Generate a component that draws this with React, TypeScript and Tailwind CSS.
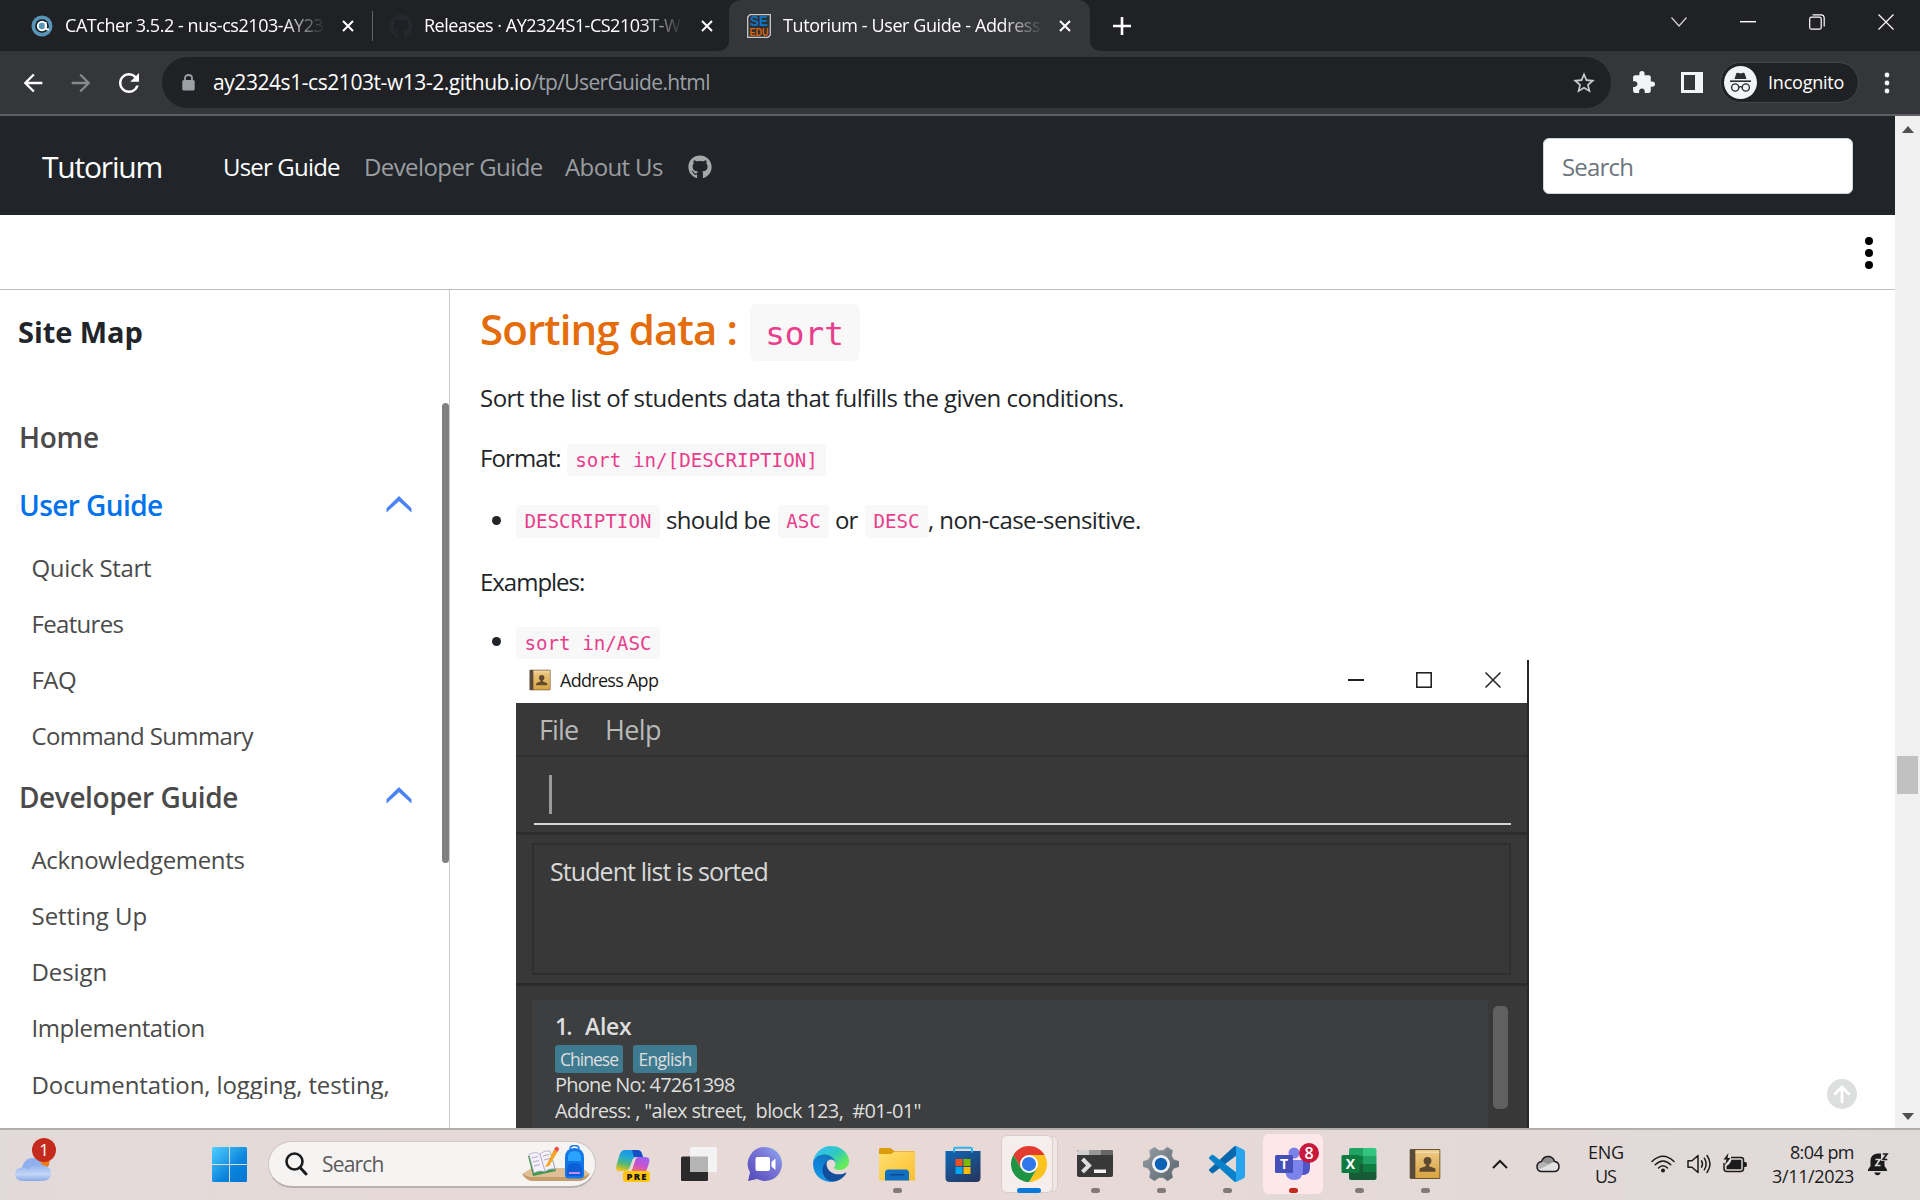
import React from "react";
import { FaGithub } from "react-icons/fa";
import { MdArrowBack, MdArrowForward, MdExtension, MdRefresh, MdStarBorder } from "react-icons/md";

/* ---------- Browser chrome ---------- */

function TabClose({ className = "" }: { className?: string }) {
  return (
    <svg className={`shrink-0 ${className}`} width="12" height="12" viewBox="0 0 12 12">
      <path d="M1 1L11 11M11 1L1 11" stroke="#fff" strokeWidth="2" />
    </svg>
  );
}

function TabStrip() {
  return (
    <div className="flex h-[51px] items-center bg-[#202124] text-[18px] text-white">
      <div className="flex h-[51px] w-[372px] shrink-0 items-center pl-[31px]">
        <svg className="shrink-0" width="22" height="22" viewBox="0 0 22 22">
          <circle cx="11" cy="11" r="10.5" fill="#5795b9" />
          <circle cx="11" cy="11" r="6.8" fill="#111418" />
          <circle cx="11" cy="11" r="4.2" fill="#5795b9" stroke="#fff" strokeWidth="2" />
          <path d="M14.6 7V12.5Q15.5 15 18 14.5" stroke="#fff" strokeWidth="2" fill="none" />
        </svg>
        <div className="ml-[12px] w-[260px] overflow-hidden whitespace-pre tracking-[-0.0255em] [mask-image:linear-gradient(to_right,#000_84%,transparent_100%)]">
          CATcher 3.5.2 - nus-cs2103-AY23
        </div>
        <TabClose className="ml-[17px]" />
      </div>
      <div className="h-[30px] w-px shrink-0 bg-[#5f6368]" />
      <div className="flex h-[51px] w-[356px] shrink-0 items-center pl-[16px]">
        <FaGithub className="size-[24px] shrink-0 text-[#24292e]" />
        <div className="ml-[11px] w-[259px] overflow-hidden whitespace-pre tracking-[-0.0275em] [mask-image:linear-gradient(to_right,#000_84%,transparent_100%)]">
          Releases · AY2324S1-CS2103T-W
        </div>
        <TabClose className="ml-[18px]" />
      </div>
      <div className="relative flex h-[51px] w-[361px] shrink-0 items-center rounded-t-[12px] bg-[#35363a] pl-[18px]">
        <div className="absolute bottom-0 -left-[10px] size-[10px] bg-[#35363a]">
          <div className="size-full rounded-br-[10px] bg-[#202124]" />
        </div>
        <div className="absolute -right-[10px] bottom-0 size-[10px] bg-[#35363a]">
          <div className="size-full rounded-bl-[10px] bg-[#202124]" />
        </div>
        <svg className="shrink-0" width="24" height="24" viewBox="0 0 24 24">
          <path d="M3 0.7H23.3V21L21 23.3H0.7V3Z" fill="#303135" stroke="#c9cacc" strokeWidth="1.3" />
          <text x="12" y="12.2" fill="#0b76c8" fontSize="14" fontWeight="700" textAnchor="middle" textLength="18" lengthAdjust="spacingAndGlyphs" fontFamily="Liberation Sans">SE</text>
          <text x="12" y="22" fill="#d9660d" fontSize="10.5" fontWeight="700" textAnchor="middle" textLength="19" lengthAdjust="spacingAndGlyphs" fontFamily="Liberation Sans">EDU</text>
        </svg>
        <div className="ml-[12px] w-[260px] overflow-hidden whitespace-pre tracking-[-0.0225em] [mask-image:linear-gradient(to_right,#000_84%,transparent_100%)]">
          Tutorium - User Guide - Address
        </div>
        <TabClose className="ml-[16px]" />
      </div>
      <svg className="ml-[23px] shrink-0" width="18" height="18" viewBox="0 0 18 18">
        <path d="M9 0V18M0 9H18" stroke="#fff" strokeWidth="2.6" />
      </svg>
      <div className="mb-[8px] ml-auto flex items-center pr-[26px]">
        <svg className="mr-[53px]" width="16" height="10" viewBox="0 0 16 10">
          <path d="M0.5 0.5L8 9L15.5 0.5" stroke="#d5d5d6" strokeWidth="1.2" fill="none" />
        </svg>
        <svg className="mr-[53px]" width="16" height="2" viewBox="0 0 16 2">
          <rect width="16" height="1.4" fill="#fff" />
        </svg>
        <svg className="mr-[53px]" width="16" height="16" viewBox="0 0 16 16">
          <rect x="0.7" y="3.2" width="11.5" height="12" rx="1.8" stroke="#fff" strokeWidth="1.2" fill="none" />
          <path d="M3.6 0.8H12Q15.2 0.8 15.2 4V12.5" stroke="#fff" strokeWidth="1.2" fill="none" />
        </svg>
        <svg width="16" height="16" viewBox="0 0 16 16">
          <path d="M0.5 0.5L15.5 15.5M15.5 0.5L0.5 15.5" stroke="#fff" strokeWidth="1.2" />
        </svg>
      </div>
    </div>
  );
}

function AddressBar() {
  return (
    <div className="flex h-[65px] items-center border-b-2 border-[#5e5f62] bg-[#35363a] text-white">
      <MdArrowBack className="ml-[19px] size-[28px] shrink-0" />
      <MdArrowForward className="ml-[20px] size-[28px] shrink-0 text-[#87888b]" />
      <MdRefresh className="ml-[19px] size-[30px] shrink-0" />
      <div className="ml-[18px] flex h-[51px] w-[1449px] shrink-0 items-center rounded-full bg-[#202124] text-[21px]">
        <svg className="ml-[20px] shrink-0" width="13" height="17" viewBox="0 0 13 17">
          <rect x="0.300" y="6" width="12.400" height="10.500" rx="1.500" fill="#9aa0a6" />
          <path d="M3 7V4.200Q3 1 6.500 1Q10 1 10 4.200V7" stroke="#9aa0a6" strokeWidth="1.800" fill="none" />
        </svg>
        <div className="ml-[18px] whitespace-pre tracking-[-0.0208em]">ay2324s1-cs2103t-w13-2.github.io</div>
        <div className="whitespace-pre tracking-[-0.0304em] text-[#9aa0a6]">/tp/UserGuide.html</div>
        <MdStarBorder className="mr-[14px] ml-auto size-[26px] shrink-0 text-[#c7c8ca]" />
      </div>
      <MdExtension className="ml-[20px] size-[25px] shrink-0 text-[#f1f3f4]" />
      <div className="ml-[25px] flex h-[21px] w-[22px] shrink-0 bg-[#f1f3f4] p-[3px]">
        <div className="h-full w-[11px] bg-[#35363a]" />
      </div>
      <div className="ml-[17px] flex h-[41px] w-[139px] shrink-0 items-center rounded-full border border-[#46474a] bg-[#202124]">
        <svg className="ml-[3px] shrink-0" width="33" height="33" viewBox="0 0 33 33">
          <circle cx="16.5" cy="16.5" r="16.5" fill="#f1f3f4" />
          <path d="M10.5 13L12.3 7.5Q12.6 6.6 13.6 6.8L16.5 7.4L19.4 6.8Q20.4 6.6 20.7 7.5L22.5 13Z" fill="#2b2c30" />
          <path d="M6 15.2H27" stroke="#2b2c30" strokeWidth="1.6" />
          <circle cx="11.2" cy="21.5" r="3.6" stroke="#2b2c30" strokeWidth="1.4" fill="none" />
          <circle cx="21.8" cy="21.5" r="3.6" stroke="#2b2c30" strokeWidth="1.4" fill="none" />
          <path d="M14.8 21.2Q16.5 20 18.2 21.2" stroke="#2b2c30" strokeWidth="1.4" fill="none" />
        </svg>
        <div className="ml-[11px] text-[18px] tracking-[-0.012em]">Incognito</div>
      </div>
      <svg className="ml-[25px] shrink-0" width="6" height="24" viewBox="0 0 6 24">
        <circle cx="3" cy="4" r="2.4" fill="#f1f3f4" />
        <circle cx="3" cy="12" r="2.4" fill="#f1f3f4" />
        <circle cx="3" cy="20" r="2.4" fill="#f1f3f4" />
      </svg>
    </div>
  );
}

/* ---------- Web page ---------- */

function NavBar() {
  return (
    <nav className="flex h-[99px] shrink-0 items-center bg-[#212529] text-[24px] text-[#9b9da0]">
      <div className="ml-[42px] w-[181px] pt-px text-[30px] tracking-[-0.04em] text-white">Tutorium</div>
      <div className="w-[141px] pt-[3px] tracking-[-0.0341em] text-white">User Guide</div>
      <div className="w-[201px] pt-[3px] tracking-[-0.0245em]">Developer Guide</div>
      <div className="w-[123px] pt-[3px] tracking-[-0.0256em]">About Us</div>
      <FaGithub className="mt-[2px] size-[24px] text-[#a6a7a9]" />
      <div className="mr-[42px] ml-auto flex h-[56px] w-[310px] items-center rounded-[6px] border border-[#ced4da] bg-white pt-[3px] pl-[18px] tracking-[-0.0335em] text-[#6c757d]">
        Search
      </div>
    </nav>
  );
}

function Chevron() {
  return (
    <svg className="mr-[30px] mb-[2px] ml-auto" width="26" height="17" viewBox="0 0 26 17">
      <path d="M0.5 16.5V12.2L13 0L25.500 12.2V16.5L13 5.2Z" fill="#4b83f4" />
    </svg>
  );
}

function SideItem({ label, track }: { label: string; track: string }) {
  return <div className={`flex h-[56.25px] items-center pl-[31.5px] text-[24px] text-[#4a4a4a] ${track}`}>{label}</div>;
}

function Sidebar() {
  return (
    <aside className="flex w-[450px] shrink-0 flex-col border-r border-[#ccc]">
      <div className="h-[113px] pl-[18px] text-[29px] leading-[84px] font-bold tracking-[-0.0022em] text-[#212529]">
        Site Map
      </div>
      <div className="flex h-[696px] overflow-hidden">
        <div className="w-[442px] whitespace-pre">
          <div className="flex h-[68px] items-center pl-[19px] text-[28px] font-semibold tracking-[-0.0101em] text-[#4a4a4a]">
            Home
          </div>
          <div className="flex h-[68px] items-center pl-[19px] text-[28px] font-semibold tracking-[-0.0209em] text-[#0072ec]">
            User Guide
            <Chevron />
          </div>
          <div className="pt-[0.4px]">
            <SideItem label="Quick Start" track="tracking-[-0.0131em]" />
            <SideItem label="Features" track="tracking-[-0.0283em]" />
            <SideItem label="FAQ" track="tracking-[-0.022em]" />
            <SideItem label="Command Summary" track="tracking-[-0.0251em]" />
          </div>
          <div className="flex h-[67px] items-center pb-[2px] pl-[19px] text-[28px] font-semibold tracking-[-0.0145em] text-[#4a4a4a]">
            Developer Guide
            <Chevron />
          </div>
          <SideItem label="Acknowledgements" track="tracking-[-0.0131em]" />
          <SideItem label="Setting Up" track="tracking-[-0.0013em]" />
          <SideItem label="Design" track="tracking-[-0.003em]" />
          <SideItem label="Implementation" track="tracking-[-0.0175em]" />
          <SideItem label="Documentation, logging, testing," track="tracking-[-0.0043em]" />
        </div>
        <div className="h-[460px] w-[7px] shrink-0 rounded-full bg-[#808080]" />
      </div>
    </aside>
  );
}

function Code({ children, className }: { children: React.ReactNode; className: string }) {
  return (
    <code
      className={`flex shrink-0 items-center justify-center rounded-[4px] bg-[#f8f8f8] pt-[2px] font-['DejaVu_Sans_Mono',monospace] text-[19.2px] whitespace-pre text-[#e83e8c] ${className}`}
    >
      {children}
    </code>
  );
}

function AddressBookIcon({ size }: { size: number }) {
  return (
    <svg className="shrink-0" width={size} height={size} viewBox="0 0 32 32">
      <defs>
        <linearGradient id="book" x1="0" y1="0" x2="0" y2="1">
          <stop offset="0" stopColor="#ecc987" />
          <stop offset="1" stopColor="#d9a441" />
        </linearGradient>
      </defs>
      <rect x="0.7" y="1" width="30.6" height="30" rx="1.2" fill="#6b5230" />
      <rect x="1.4" y="2" width="4.4" height="28" fill="#57493b" />
      <rect x="6.4" y="2" width="24" height="28" fill="url(#book)" />
      <path d="M6.4 4.2H30.4" stroke="#f6e0b0" strokeWidth="1.2" />
      <circle cx="18.5" cy="12.8" r="3.9" fill="#5d4a2f" />
      <path d="M16.8 14H20.2V18.2L26 20.2Q26.6 20.6 26.6 23.8H10.4Q10.4 20.6 11 20.2L16.8 18.2Z" fill="#5d4a2f" />
    </svg>
  );
}

function AddressApp() {
  return (
    <div className="mt-px ml-[36px] flex h-[468px] w-[1013px] overflow-hidden border-r-2 border-[#26272b] bg-[#383838]">
      <div className="flex w-full flex-col">
        <div className="flex h-[43px] shrink-0 items-center bg-white pr-[26px] pb-[3px] pl-[13px]">
          <AddressBookIcon size={22} />
          <div className="ml-[9px] text-[18px] font-medium tracking-[-0.04em] text-[#1a1a1a]">Address App</div>
          <svg className="mr-[52px] ml-auto" width="16" height="2" viewBox="0 0 16 2">
            <rect width="16" height="2" fill="#222" />
          </svg>
          <svg className="mr-[53px]" width="16" height="16" viewBox="0 0 16 16">
            <rect x="0.8" y="0.8" width="14.4" height="14.4" stroke="#222" strokeWidth="1.6" fill="none" />
          </svg>
          <svg width="16" height="16" viewBox="0 0 16 16">
            <path d="M0.5 0.5L15.5 15.5M15.5 0.5L0.5 15.5" stroke="#222" strokeWidth="1.5" />
          </svg>
        </div>
        <div className="flex h-[54px] shrink-0 items-center border-b-2 border-[#2f2f2f] pt-[2px] pl-[23px] text-[27px] text-[#b9b9b9]">
          <div className="w-[66px] tracking-[-0.0317em]">File</div>
          <div className="tracking-[-0.0233em]">Help</div>
        </div>
        <div className="h-[78px] shrink-0 border-b-[3px] border-[#2d2d2d] pt-[18px] pr-[16px] pl-[18px]">
          <div className="h-[50px] border-b-[2px] border-[#d6d4d6] pl-[15px]">
            <div className="h-[39px] w-[3px] bg-[#9a9a9a]" />
          </div>
        </div>
        <div className="h-[151px] shrink-0 border-b-[3px] border-[#2a2a2a] px-[16px] pt-[8px]">
          <div className="h-[132px] border-2 border-[#2e2e2e] pt-[6px] pl-[16px] text-[25px] leading-[40px] tracking-[-0.0368em] text-[#d9d9d9]">
            Student list is sorted
          </div>
        </div>
        <div className="flex h-[142px] shrink-0 pt-[14px] pl-[16px]">
          <div className="w-[956px] bg-[#3c3e3f] pl-[23px] whitespace-pre text-[#dedede]">
            <div className="flex h-[45px] items-center pt-[8px] text-[23px] font-semibold tracking-[-0.0126em]">
              <div className="w-[30px] tracking-[-0.08em]">1.</div>
              <div>Alex</div>
            </div>
            <div className="flex h-[28px] gap-[10px] text-[17.5px] font-medium">
              <div className="flex w-[68px] items-center justify-center rounded-[3px] bg-[#3e7b91] tracking-[-0.055em]">
                Chinese
              </div>
              <div className="flex w-[64px] items-center justify-center rounded-[3px] bg-[#3e7b91] tracking-[-0.04em]">
                English
              </div>
            </div>
            <div className="text-[20px] leading-[23px] tracking-[-0.04em]">Phone No: 47261398</div>
            <div className="pt-[1px] text-[20px] leading-[27px] tracking-[-0.0324em]">
              {'Address: , "alex street,  block 123,  #01-01"'}
            </div>
          </div>
          <div className="mt-[6px] ml-[5px] h-[103px] w-[15px] rounded-[5px] bg-[#606060]" />
        </div>
      </div>
    </div>
  );
}

function Article() {
  return (
    <main className="flex-1 overflow-hidden pl-[30px] text-[24px] whitespace-pre text-[#212529]">
      <h2 className="flex h-[85px] items-start text-[42px] font-semibold text-[#e46c0a]">
        <span className="w-[270px] leading-[78px] tracking-[-0.022em]">Sorting data :</span>
        <code className="mt-[14px] h-[57px] w-[110px] rounded-[6px] bg-[#f8f8f8] pr-px text-center font-['DejaVu_Sans_Mono',monospace] text-[32.7px] leading-[61px] font-normal text-[#e83e8c]">
          sort
        </code>
      </h2>
      <p className="mt-[5px] leading-[36px] tracking-[-0.0215em]">
        Sort the list of students data that fulfills the given conditions.
      </p>
      <div className="mt-[28px] flex h-[32px] items-start">
        <span className="w-[87px] leading-[28px] tracking-[-0.038em]">Format:</span>
        <Code className="h-[32px] w-[259px]">sort in/[DESCRIPTION]</Code>
      </div>
      <div className="mt-[29px] flex h-[33px] items-start">
        <span className="mt-[11px] mr-[15px] ml-[12px] size-[9px] rounded-full bg-[#212529]" />
        <Code className="h-[33px] w-[144px]">DESCRIPTION</Code>
        <span className="w-[118px] pl-[6px] leading-[30px] tracking-[-0.0285em]">should be</span>
        <Code className="h-[33px] w-[51px]">ASC</Code>
        <span className="w-[36px] pl-[6px] leading-[30px] tracking-[-0.04em]">or</span>
        <Code className="h-[33px] w-[63px]">DESC</Code>
        <span className="leading-[30px] tracking-[-0.0244em]">, non-case-sensitive.</span>
      </div>
      <p className="mt-[25px] leading-[37px] tracking-[-0.0422em]">Examples:</p>
      <div className="mt-[27px] flex h-[32px] items-start">
        <span className="mt-[10px] mr-[15px] ml-[12px] size-[9px] rounded-full bg-[#212529]" />
        <Code className="h-[32px] w-[144px]">sort in/ASC</Code>
      </div>
      <AddressApp />
    </main>
  );
}

function PageScrollbar() {
  return (
    <div className="flex w-[25px] shrink-0 flex-col items-center bg-[#f0f0f0]">
      <svg className="mt-[10px]" width="12" height="7" viewBox="0 0 12 7">
        <path d="M6 0L12 7H0Z" fill="#505050" />
      </svg>
      <div className="mt-[623px] h-[38px] w-[21px] bg-[#c1c1c1]" />
      <svg className="mt-auto mb-[8px]" width="12" height="7" viewBox="0 0 12 7">
        <path d="M0 0H12L6 7Z" fill="#505050" />
      </svg>
    </div>
  );
}

function Page() {
  return (
    <div className="flex h-[1012px] bg-white">
      <div className="relative flex w-[1895px] flex-col">
        <NavBar />
        <div className="flex h-[75px] shrink-0 items-center justify-end border-b border-[#bfbfbf] pr-[22px]">
          <svg className="mt-[2px]" width="8" height="34" viewBox="0 0 8 34">
            <circle cx="4" cy="5" r="4" />
            <circle cx="4" cy="17" r="4" />
            <circle cx="4" cy="29" r="4" />
          </svg>
        </div>
        <div className="flex h-[838px]">
          <Sidebar />
          <Article />
        </div>
        <svg className="absolute right-[38px] bottom-[19px]" width="30" height="30" viewBox="0 0 30 30">
          <circle cx="15" cy="15" r="15" fill="#dcdfde" />
          <path d="M15 23V8M8 15L15 8L22 15" stroke="#fff" strokeWidth="2.8" fill="none" strokeLinecap="round" />
        </svg>
      </div>
      <PageScrollbar />
    </div>
  );
}

/* ---------- Taskbar ---------- */

function WeatherWidget() {
  return (
    <div className="relative h-[70px] w-[55px]">
      <svg className="absolute top-[24px] left-[14px]" width="40" height="30" viewBox="0 0 40 30">
        <defs>
          <linearGradient id="cloud" x1="0" y1="0" x2="0" y2="1">
            <stop offset="0" stopColor="#8fb2ee" />
            <stop offset="0.6" stopColor="#c3d5f5" />
            <stop offset="1" stopColor="#8aa9e6" />
          </linearGradient>
        </defs>
        <circle cx="28" cy="8" r="7.5" fill="#f07a12" />
        <path d="M7 18Q9 4 18 4Q27 4 28 12Q20 14 18 20Z" fill="#8fb0ec" />
        <path d="M9 27Q1 27 1 20Q1 13.500 8.500 13.500Q12 13.500 14.500 16Q17 10.500 24 10.500Q37 11 37 19.500Q37 27 28 27Z" fill="url(#cloud)" />
      </svg>
      <div className="absolute top-[8px] left-[32px] flex size-[24px] items-center justify-center rounded-full bg-[#c42b1c] text-[17px] text-white">
        1
      </div>
    </div>
  );
}

function WindowsLogo() {
  return (
    <svg className="shrink-0" width="35" height="35" viewBox="0 0 35 35">
      <defs>
        <linearGradient id="win" gradientUnits="userSpaceOnUse" x1="0" y1="0" x2="35" y2="35">
          <stop offset="0" stopColor="#4fd0ff" />
          <stop offset="0.6" stopColor="#0b85dc" />
          <stop offset="1" stopColor="#0074d1" />
        </linearGradient>
      </defs>
      <path d="M1.5 0H17V17H0V1.500Q0 0 1.500 0ZM18 0H33.500Q35 0 35 1.500V17H18ZM0 18H17V35H1.500Q0 35 0 33.500ZM18 18H35V33.500Q35 35 33.500 35H18Z" fill="url(#win)" />
    </svg>
  );
}

function SearchPill() {
  return (
    <div className="ml-[21px] flex h-[47px] w-[328px] items-center rounded-full border border-b-2 border-[#cfc6c5] border-b-[#b9b0af] bg-[#f6f4f3]">
      <svg className="ml-[16px]" width="23" height="24" viewBox="0 0 23 24">
        <circle cx="9.500" cy="9.500" r="8" stroke="#1c1c1c" strokeWidth="2.600" fill="none" />
        <path d="M15 15.500L21 22" stroke="#1c1c1c" strokeWidth="3" strokeLinecap="round" />
      </svg>
      <div className="ml-[14px] pt-[2px] text-[21px] tracking-[-0.0392em] text-[#5c5a5a]">Search</div>
      <svg className="mr-[5px] ml-auto" width="68" height="38" viewBox="0 0 68 38">
        <path d="M0 29L10 23H60L68 29Q64 35 58 36H10Q4 35 0 29Z" fill="#dfbe96" />
        <path d="M0 29Q4 35 10 36H58Q64 35 68 29L60 32H8Z" fill="#c79c6b" />
        <path d="M6 11L29 8L34 26L11 31Z" fill="#3f9a4d" />
        <path d="M7 9.500Q13 6 18 9Q22 5 28 6L33 24Q27 23 23 26.500Q17 25 12 28Z" fill="#f4f1f8" stroke="#a79fc4" strokeWidth="0.7" />
        <path d="M18 9L23 26M10 13L16 11.500M11 17L17 15.500M12 21L18 19.500M21 11L27 9.500M22 15L28 13.500" stroke="#a79fc4" strokeWidth="0.9" />
        <path d="M25 19L23 22L27 21L35.500 7L32 4.500Z" fill="#f6a623" />
        <path d="M32 4.500L33.500 2Q37 1 37 4.500L35.500 7Z" fill="#ef4f4f" />
        <path d="M48 4Q48 0.500 52.500 0.500Q57 0.500 57 4" stroke="#1779e8" strokeWidth="1.500" fill="none" />
        <path d="M43 13Q43 3 52.500 3Q62 3 62 13V30Q62 33.500 58 33.500H47Q43 33.500 43 30Z" fill="#1276e6" />
        <path d="M46 12Q46 6 52.500 6Q59 6 59 12V16H46Z" fill="#2aa2ff" />
        <path d="M45 24Q45 18 52.500 18Q60 18 60 24V31H45Z" fill="#0b5fd6" />
        <path d="M47 28H58" stroke="#c58cf0" strokeWidth="2" />
      </svg>
    </div>
  );
}

function Slot({ children, dot = "none" }: { children: React.ReactNode; dot?: "none" | "gray" }) {
  return (
    <div className="relative flex h-[68px] w-[66px] shrink-0 items-center justify-center">
      {children}
      {dot === "gray" && <div className="absolute bottom-[5px] left-[29px] h-[5px] w-[9px] rounded-full bg-[#817a79]" />}
    </div>
  );
}

function CopilotIcon() {
  return (
    <svg width="36" height="36" viewBox="0 0 36 36">
      <defs>
        <linearGradient id="cpa" x1="0.6" y1="0" x2="0.3" y2="1">
          <stop offset="0" stopColor="#1c8fe8" />
          <stop offset="0.35" stopColor="#22a8d8" />
          <stop offset="0.7" stopColor="#55b871" />
          <stop offset="1" stopColor="#f0c41a" />
        </linearGradient>
        <linearGradient id="cpb" x1="0.6" y1="0" x2="0.3" y2="1">
          <stop offset="0" stopColor="#9a62f0" />
          <stop offset="0.5" stopColor="#c94fcf" />
          <stop offset="1" stopColor="#f5785b" />
        </linearGradient>
      </defs>
      <path d="M10 4H22Q26 4 27 8L28 11H22Q18 11 17 15L14 23Q13 25 10 25H4Q0 25 1.500 19L4.500 9Q6 4 10 4Z" fill="url(#cpa)" />
      <path d="M17 4H22Q26 4 27 8L28 11H19Z" fill="#174fc4" />
      <path d="M24 11H30Q36 11 34 17L32 23Q31 27 28 27H16L20 15Q21 11 24 11Z" fill="url(#cpb)" />
      <rect x="8" y="25" width="27" height="11" rx="3" fill="#ffc40d" />
      <text x="21.500" y="34" fontSize="9.500" fontWeight="800" fill="#111" textAnchor="middle" textLength="20" fontFamily="Open Sans">PRE</text>
    </svg>
  );
}

function TaskViewIcon() {
  return (
    <svg width="36" height="36" viewBox="0 0 36 36">
      <rect x="0" y="10.500" width="27" height="24.500" rx="1.500" fill="#2a2a2a" />
      <rect x="9" y="1" width="27" height="25" rx="1.500" fill="#f3f3f3" />
      <rect x="9" y="10.500" width="18" height="15.500" fill="#b4b4b4" />
    </svg>
  );
}

function ChatIcon() {
  return (
    <svg width="36" height="36" viewBox="0 0 36 36">
      <defs>
        <linearGradient id="chat" x1="1" y1="0" x2="0" y2="1">
          <stop offset="0" stopColor="#8bb0f2" />
          <stop offset="0.4" stopColor="#7b77d8" />
          <stop offset="1" stopColor="#5148b8" />
        </linearGradient>
      </defs>
      <path d="M18 1A17 17 0 1 1 10 33L1 35L3 26.500A17 17 0 0 1 18 1Z" fill="url(#chat)" />
      <rect x="8.500" y="11" width="14.500" height="14" rx="2" fill="#fff" />
      <path d="M24.500 16L28.500 12.500V24L24.500 20.500Z" fill="#fff" />
    </svg>
  );
}

function EdgeIcon() {
  return (
    <svg width="36" height="36" viewBox="0 0 256 256">
      <defs>
        <linearGradient id="eg1" x1="0.25" y1="0" x2="1" y2="0.6">
          <stop offset="0" stopColor="#35c1f1" />
          <stop offset="0.5" stopColor="#2fc9c0" />
          <stop offset="1" stopColor="#66eb5a" />
        </linearGradient>
        <linearGradient id="eg2" x1="0.6" y1="0" x2="0.3" y2="1">
          <stop offset="0" stopColor="#1373b8" />
          <stop offset="0.5" stopColor="#0f84d8" />
          <stop offset="1" stopColor="#1a9be8" />
        </linearGradient>
      </defs>
      <path d="M231 190.500c-3.400 1.800-6.900 3.400-10.500 4.700a101.500 101.500 0 0 1-35.900 6.500c-47.300 0-88.500-32.500-88.500-74.300a31.500 31.500 0 0 1 16.400-27.300c-42.800 1.800-53.800 46.400-53.800 72.500 0 74 68.100 81.400 82.800 81.400 7.900 0 19.800-2.300 27-4.600l1.300-.4a128.300 128.300 0 0 0 66.600-52.800 4 4 0 0 0-5.400-5.700Z" fill="#114f9c" />
      <path d="M105.700 242.100a79.200 79.200 0 0 1-22.700-21.300 80.700 80.700 0 0 1 29.500-120.700c3.200-1.500 8.500-4.100 15.600-4a32.400 32.400 0 0 1 25.700 13 31.900 31.900 0 0 1 6.300 18.600c0-.2 24.500-79.600-80-79.600-43.900 0-80 41.600-80 78.200a130.200 130.200 0 0 0 12.100 56 128 128 0 0 0 156.400 67 75.500 75.500 0 0 1-62.800-8Z" fill="url(#eg2)" />
      <path d="M152.300 148.900c-.8 1-3.300 2.500-3.300 5.700 0 2.600 1.700 5.100 4.700 7.200 14.400 10 41.500 8.700 41.600 8.700a59.600 59.600 0 0 0 30.300-8.300 61.400 61.400 0 0 0 30.400-52.900c.3-22.400-8-37.300-11.300-43.900C223.500 23.900 177.700 0 128 0A128 128 0 0 0 0 126.200c.5-36.500 36.800-66 80-66 3.500 0 23.500.3 42 10.100 16.300 8.600 24.900 18.900 30.800 29.200 6.200 10.700 7.300 24.100 7.300 29.500s-2.700 13.300-7.800 19.900Z" fill="url(#eg1)" />
    </svg>
  );
}

function ExplorerIcon() {
  return (
    <svg width="36" height="36" viewBox="0 0 36 36">
      <defs>
        <linearGradient id="fold" x1="0" y1="0" x2="1" y2="1">
          <stop offset="0" stopColor="#ffdf70" />
          <stop offset="1" stopColor="#fbc02d" />
        </linearGradient>
      </defs>
      <path d="M0 3.500Q0 2 1.500 2H11Q12 2 15 5H34Q36 5 36 7V12H0Z" fill="#dc9c0b" />
      <path d="M0 8H12L15.500 5.500H34.500Q36 5.500 36 7V34.500H0Z" fill="url(#fold)" />
      <path d="M6 34.500V27Q6 23.500 9.500 23.500H26.500Q30 23.500 30 27V34.500Z" fill="#0f6fc2" />
      <rect x="11" y="28" width="14.500" height="1.600" rx="0.800" fill="#0b4a8c" />
    </svg>
  );
}

function StoreIcon() {
  return (
    <svg width="36" height="36" viewBox="0 0 36 36">
      <defs>
        <linearGradient id="store" x1="0" y1="0" x2="0.700" y2="1">
          <stop offset="0" stopColor="#0f67b6" />
          <stop offset="1" stopColor="#243a66" />
        </linearGradient>
      </defs>
      <path d="M9 8V3Q9 1.800 10.200 1.800H25.800Q27 1.800 27 3V8" stroke="#2bb4ee" strokeWidth="2" fill="none" />
      <path d="M0.500 5H35.500V32Q35.500 36 31.500 36H4.500Q0.500 36 0.500 32Z" fill="url(#store)" />
      <path d="M9 6.500V3M27 6.500V3" stroke="#2bb4ee" strokeWidth="2" />
      <rect x="10.500" y="13" width="7" height="7" fill="#f25022" />
      <rect x="18.500" y="13" width="7" height="7" fill="#7fba00" />
      <rect x="10.500" y="21" width="7" height="7" fill="#00a4ef" />
      <rect x="18.500" y="21" width="7" height="7" fill="#ffb900" />
    </svg>
  );
}

function ChromeIcon() {
  return (
    <svg width="36" height="36" viewBox="0 0 48 48">
      <path d="M24 12H44.780A24 24 0 0 0 3.220 12L13.610 30L24 24Z" fill="#e33b2e" />
      <path d="M44.780 12A24 24 0 0 1 24 48L34.390 30L24 24V12Z" fill="#fcc31e" />
      <path d="M24 48A24 24 0 0 1 3.220 12L13.610 30L24 24L34.390 30Z" fill="#1f9443" />
      <circle cx="24" cy="24" r="12" fill="#fff" />
      <circle cx="24" cy="24" r="9.500" fill="#3079ec" />
    </svg>
  );
}

function TerminalIcon() {
  return (
    <svg width="36" height="36" viewBox="0 0 36 36">
      <rect x="0" y="4" width="36" height="27" rx="2" fill="#383838" />
      <path d="M0 9V6Q0 4 2 4H12V9Z" fill="#cfcfcf" />
      <rect x="12" y="4" width="12" height="5" fill="#989898" />
      <path d="M24 4H34Q36 4 36 6V9H24Z" fill="#666" />
      <path d="M5.500 13L12 19.500L5.500 26" stroke="#dcdcdc" strokeWidth="4" fill="none" />
      <rect x="17" y="23.500" width="12" height="3.500" fill="#f2f2f2" />
    </svg>
  );
}

function SettingsIcon() {
  return (
    <svg width="36" height="36" viewBox="0 0 36 36">
      <defs>
        <linearGradient id="gear" gradientUnits="userSpaceOnUse" x1="0" y1="0" x2="36" y2="36">
          <stop offset="0" stopColor="#98a0a6" />
          <stop offset="1" stopColor="#56616b" />
        </linearGradient>
      </defs>
      <path
        d="M0 15.500L5.500 13.500L7.500 10L6.500 4.500L11.500 1.200L16 4.500H20L24.500 1.200L29.500 4.500L28.500 10L30.500 13.500L36 15.500V20.500L30.500 22.500L28.500 26L29.500 31.500L24.500 34.800L20 31.500H16L11.500 34.800L6.500 31.500L7.500 26L5.500 22.500L0 20.500Z"
        fill="url(#gear)"
        stroke="url(#gear)"
        strokeWidth="0.500"
        strokeLinejoin="round"
      />
      <circle cx="18" cy="18" r="9" fill="#eef0f1" />
      <circle cx="18" cy="18" r="6.200" fill="#0d62b5" />
    </svg>
  );
}

function VSCodeIcon() {
  return (
    <svg width="36" height="36" viewBox="0 0 100 100">
      <path d="M96.500 10.800L75.900 .9a6.200 6.200 0 0 0-7.100 1.200L1.400 63.600a4.200 4.200 0 0 0 0 6.100l5.500 5a4.200 4.200 0 0 0 5.300.3L93.400 13.400c2.700-2.100 6.600-.1 6.600 3.300v-.3a6.300 6.300 0 0 0-3.500-5.600Z" fill="#0868ac" />
      <path d="M96.500 89.200L75.900 99.100a6.200 6.200 0 0 1-7.100-1.200L1.400 36.400a4.200 4.200 0 0 1 0-6.100l5.500-5a4.200 4.200 0 0 1 5.300-.3L93.400 86.600c2.700 2.100 6.600.1 6.600-3.300v.3a6.300 6.300 0 0 1-3.500 5.600Z" fill="#0a82cb" />
      <path d="M75.900 99.100a6.200 6.200 0 0 1-7.100-1.200c2.300 2.300 6.200.7 6.200-2.600V4.700c0-3.300-3.900-4.900-6.200-2.600a6.200 6.200 0 0 1 7.100-1.200l20.600 9.900A6.300 6.300 0 0 1 100 16.400v67.200a6.300 6.300 0 0 1-3.500 5.600Z" fill="#27a5f0" />
    </svg>
  );
}

function TeamsIcon() {
  return (
    <svg width="36" height="36" viewBox="0 0 36 36">
      <circle cx="19" cy="7" r="5.500" fill="#7b83eb" />
      <path d="M24 14H33Q35 14 35 16V22Q35 29 28 29H24Z" fill="#4f55c4" />
      <path d="M11 14H27Q28 14 28 15V24Q28 34 19 34Q11.500 34 10.500 27Z" fill="#7b83eb" />
      <rect x="0" y="9" width="18" height="18" rx="1.500" fill="#464eb8" />
      <text x="9" y="23" fontSize="14" fontWeight="700" fill="#fff" textAnchor="middle" fontFamily="Open Sans">T</text>
    </svg>
  );
}

function ExcelIcon() {
  return (
    <svg width="36" height="36" viewBox="0 0 36 36">
      <path d="M8 4Q8 2 10 2H22V10H8Z" fill="#21a366" />
      <path d="M22 2H33.500Q35.500 2 35.500 4V10H22Z" fill="#33c481" />
      <rect x="8" y="10" width="14" height="8" fill="#107c41" />
      <rect x="22" y="10" width="13.500" height="8" fill="#21a366" />
      <rect x="22" y="18" width="13.500" height="8" fill="#107c41" />
      <path d="M8 18H22V26H35.500V32Q35.500 34 33.500 34H10Q8 34 8 32Z" fill="#185c37" />
      <rect x="0.500" y="9" width="18" height="18" rx="1.500" fill="#0f7a3e" />
      <text x="9.500" y="23" fontSize="14" fontWeight="700" fill="#fff" textAnchor="middle" fontFamily="Open Sans">X</text>
    </svg>
  );
}

function Tray() {
  return (
    <div className="ml-auto flex h-[68px] items-center pr-[30px] text-[18px] leading-[24px] text-[#1b1b1b]">
      <svg className="mr-[28px]" width="16" height="10" viewBox="0 0 16 10">
        <path d="M1 9L8 2L15 9" stroke="#1b1b1b" strokeWidth="2" fill="none" />
      </svg>
      <svg className="mr-[28px]" width="24" height="18" viewBox="0 0 24 18">
        <path d="M6 16.500Q1 16.500 1 11.500Q1 7.500 5.500 6.500Q7.500 1.500 12 1.500Q17 1.500 18.500 6.500Q23 7 23 11.500Q23 16.500 18 16.500Z" fill="#e2e2e2" />
        <path d="M5.500 6.500Q7.500 1.500 12 1.500Q17 1.500 18.500 6.500L12 9.500Z" fill="#929292" />
        <path d="M1.500 13Q1 8 5.500 6.500L13 9.500L4 14Z" fill="#b5b5b5" />
        <path d="M6 16.500Q1 16.500 1 11.500Q1 7.500 5.500 6.500Q7.500 1.500 12 1.500Q17 1.500 18.500 6.500Q23 7 23 11.500Q23 16.500 18 16.500Z" fill="none" stroke="#1b1b1b" strokeWidth="1.500" />
      </svg>
      <div className="mr-[28px] w-[35px] text-center">
        <div className="tracking-[-0.0154em]">ENG</div>
        <div className="tracking-[-0.05em]">US</div>
      </div>
      <svg className="mr-[12px]" width="24" height="18" viewBox="0 0 24 18">
        <g stroke="#1b1b1b" strokeWidth="1.500" fill="none" strokeLinecap="round">
          <path d="M1 6.500Q12 -4 23 6.500" />
          <path d="M4.200 9.800Q12 2.200 19.800 9.800" />
          <path d="M7.500 13Q12 8.500 16.500 13" />
        </g>
        <circle cx="12" cy="15.500" r="2" fill="#1b1b1b" />
      </svg>
      <svg className="mr-[12px]" width="24" height="20" viewBox="0 0 24 20">
        <g stroke="#1b1b1b" strokeWidth="1.500" fill="none" strokeLinecap="round" strokeLinejoin="round">
          <path d="M1 6.800H5L11 1.500V18.500L5 13.200H1Z" />
          <path d="M14.500 6.800Q16.500 10 14.500 13.200" />
          <path d="M17.300 4.200Q21 10 17.300 15.800" />
          <path d="M20 1.500Q26 10 20 18.500" />
        </g>
      </svg>
      <svg className="mr-[24px] mb-[3px]" width="24" height="20" viewBox="0 0 24 20">
        <path d="M8 4.500H18Q20.500 4.500 20.500 7V15.500Q20.500 18.500 17.500 18.500H4Q1 18.500 1 15.500V10" stroke="#1b1b1b" strokeWidth="1.500" fill="none" />
        <path d="M8.500 6.800H18.300V16.200H3.500V13Q7 11.500 8.500 6.800Z" fill="#1b1b1b" />
        <path d="M21 9H22.500Q24 9 24 11.500Q24 14 22.500 14H21Z" fill="#1b1b1b" />
        <path d="M5.500 0L0.500 6.500H3.500L2 12L7.500 5H4.500Z" fill="#1b1b1b" />
      </svg>
      <div className="mr-[14px] w-[83px] text-right whitespace-pre">
        <div className="tracking-[-0.0305em]">8:04 pm</div>
        <div className="tracking-[-0.0205em]">3/11/2023</div>
      </div>
      <svg width="22" height="24" viewBox="0 0 22 24">
        <path d="M9.500 1.500Q2.500 2 2.500 9V14L0 17.500V19H19V17.500L16.500 14V1.500Z" fill="#1b1b1b" />
        <path d="M6 20.500H13Q11.500 23.200 9.500 23.200Q7.500 23.200 6 20.500Z" fill="#1b1b1b" />
        <path d="M13 0V9H22V0Z" fill="#dfdad9" />
        <path d="M14.800 2H19L15 7.500H19.300" stroke="#1b1b1b" strokeWidth="1.700" fill="none" />
        <path d="M7.500 7.500H12L7.800 13.500H12.500" stroke="#e0dad9" strokeWidth="1.600" fill="none" />
      </svg>
    </div>
  );
}

function Taskbar() {
  return (
    <div className="flex h-[72px] items-start border-t-2 border-[#b3adac] bg-linear-to-r from-[#e2dad9] via-[#e8d9d6] to-[#dfdad9]">
      <WeatherWidget />
      <div className="ml-[157px] flex h-[69px] items-center">
        <WindowsLogo />
        <SearchPill />
      </div>
      <div className="ml-[4px] flex">
        <Slot><CopilotIcon /></Slot>
        <Slot><TaskViewIcon /></Slot>
        <Slot><ChatIcon /></Slot>
        <Slot><EdgeIcon /></Slot>
        <Slot dot="gray"><ExplorerIcon /></Slot>
        <Slot><StoreIcon /></Slot>
        <div className="relative flex h-[68px] w-[66px] shrink-0 items-center justify-center">
          <div className="absolute top-[6px] left-[11px] h-[56px] w-[51px] rounded-[6px] border border-[#d9cdcb] bg-[#f1e8e6]" />
          <div className="absolute top-[5px] left-[5px] h-[58px] w-[52px] rounded-[6px] border border-[#d9cdcb] bg-[#f6eeec]" />
          <div className="relative">
            <ChromeIcon />
          </div>
          <div className="absolute bottom-[5px] left-[21px] h-[5px] w-[24px] rounded-full bg-[#0a7ad8]" />
        </div>
        <Slot dot="gray"><TerminalIcon /></Slot>
        <Slot dot="gray"><SettingsIcon /></Slot>
        <Slot dot="gray"><VSCodeIcon /></Slot>
        <div className="relative flex h-[68px] w-[66px] shrink-0 items-center justify-center">
          <div className="absolute top-[4px] left-[3px] h-[60px] w-[60px] rounded-[6px] bg-[#fde7e8]" />
          <div className="relative">
            <TeamsIcon />
          </div>
          <div className="absolute top-[13px] left-[39px] flex size-[20px] items-center justify-center rounded-full bg-[#c8193c] text-[16px] font-semibold text-white">
            8
          </div>
          <div className="absolute bottom-[5px] left-[29px] h-[5px] w-[9px] rounded-full bg-[#c42b1c]" />
        </div>
        <Slot dot="gray"><ExcelIcon /></Slot>
        <Slot dot="gray"><AddressBookIcon size={32} /></Slot>
      </div>
      <Tray />
    </div>
  );
}

export default function App() {
  return (
    <div className="h-[1200px] w-[1920px] overflow-hidden bg-white font-['Open_Sans','Noto_Sans',sans-serif]">
      <TabStrip />
      <AddressBar />
      <Page />
      <Taskbar />
    </div>
  );
}
